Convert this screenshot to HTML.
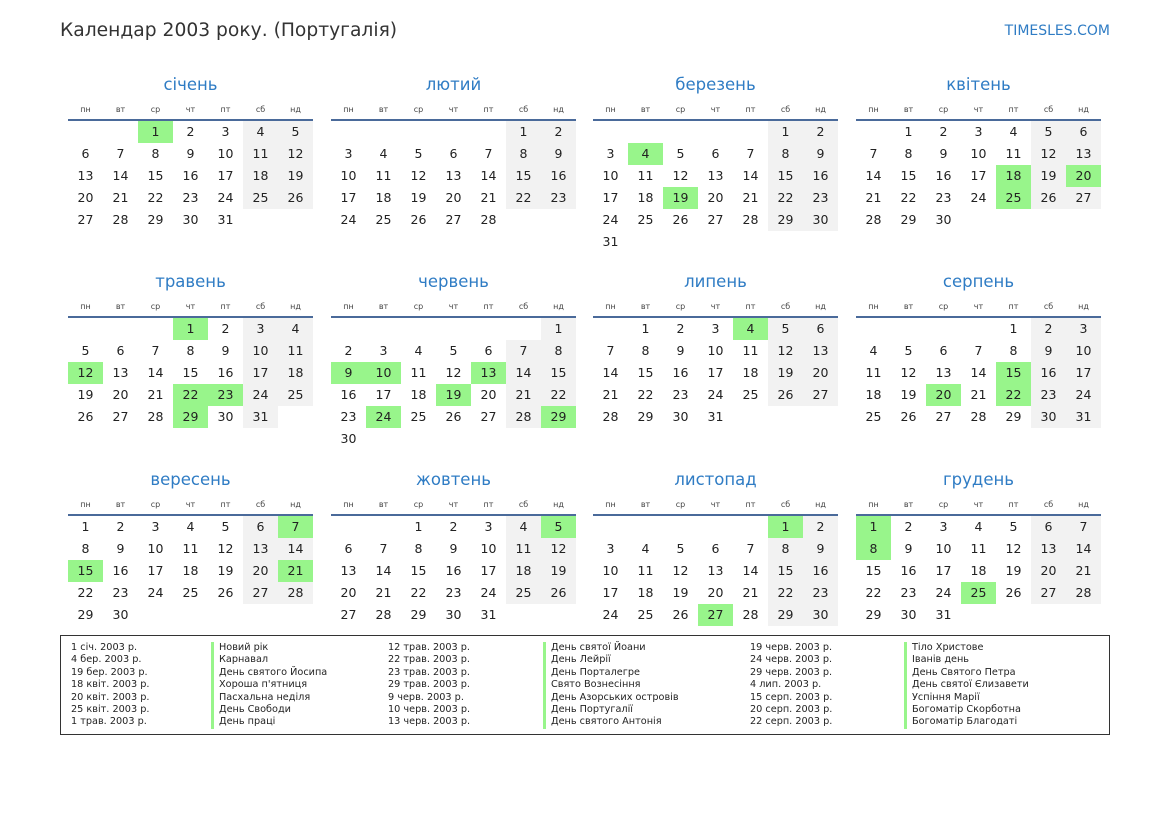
<!DOCTYPE html>
<html><head><meta charset="utf-8">
<style>
*{margin:0;padding:0;box-sizing:border-box}
body{width:1169px;height:827px;background:#fff;position:relative;font-family:"DejaVu Sans","Liberation Sans",sans-serif;color:#222;overflow:hidden}
.t{position:absolute;left:60px;top:20px;font-size:18.7px;color:#333}
.site{position:absolute;right:59px;top:23px;font-size:14px;color:#2f7cc4}
.m{position:absolute;width:245px}
.m h2{font-weight:normal;font-size:16.5px;color:#2f7cc4;text-align:center;height:30px;line-height:28px;margin-top:1px}
.hd{display:grid;grid-template-columns:repeat(7,35px);font-size:8px;color:#444;text-align:center;height:20px;line-height:18px;border-bottom:2px solid #4a6a9a}
.g{display:grid;grid-template-columns:repeat(7,35px);grid-auto-rows:22px;font-size:12.5px;text-align:center;line-height:22px}
.g i,.g s,.g u{font-style:normal;text-decoration:none;display:block}
.g s{background:#f2f2f2}
.g u{background:#98f58b}
.lg{position:absolute;left:60px;top:635px;width:1050px;height:100px;border:1px solid #333}
.c{position:absolute;top:6px;font-size:9.7px;line-height:12.4px;color:#222;white-space:nowrap}
.b div{border-left:3px solid #98f58b;padding-left:5px}
</style></head><body>
<div class="t">Календар 2003 року. (Португалія)</div>
<div class="site">TIMESLES.COM</div>

<div class="m" style="left:68px;top:70px"><h2>січень</h2><div class="hd"><span>пн</span><span>вт</span><span>ср</span><span>чт</span><span>пт</span><span>сб</span><span>нд</span></div><div class="g"><em style="grid-column:span 2"></em><u>1</u><i>2</i><i>3</i><s>4</s><s>5</s><i>6</i><i>7</i><i>8</i><i>9</i><i>10</i><s>11</s><s>12</s><i>13</i><i>14</i><i>15</i><i>16</i><i>17</i><s>18</s><s>19</s><i>20</i><i>21</i><i>22</i><i>23</i><i>24</i><s>25</s><s>26</s><i>27</i><i>28</i><i>29</i><i>30</i><i>31</i></div></div>

<div class="m" style="left:331px;top:70px"><h2>лютий</h2><div class="hd"><span>пн</span><span>вт</span><span>ср</span><span>чт</span><span>пт</span><span>сб</span><span>нд</span></div><div class="g"><em style="grid-column:span 5"></em><s>1</s><s>2</s><i>3</i><i>4</i><i>5</i><i>6</i><i>7</i><s>8</s><s>9</s><i>10</i><i>11</i><i>12</i><i>13</i><i>14</i><s>15</s><s>16</s><i>17</i><i>18</i><i>19</i><i>20</i><i>21</i><s>22</s><s>23</s><i>24</i><i>25</i><i>26</i><i>27</i><i>28</i></div></div>

<div class="m" style="left:593px;top:70px"><h2>березень</h2><div class="hd"><span>пн</span><span>вт</span><span>ср</span><span>чт</span><span>пт</span><span>сб</span><span>нд</span></div><div class="g"><em style="grid-column:span 5"></em><s>1</s><s>2</s><i>3</i><u>4</u><i>5</i><i>6</i><i>7</i><s>8</s><s>9</s><i>10</i><i>11</i><i>12</i><i>13</i><i>14</i><s>15</s><s>16</s><i>17</i><i>18</i><u>19</u><i>20</i><i>21</i><s>22</s><s>23</s><i>24</i><i>25</i><i>26</i><i>27</i><i>28</i><s>29</s><s>30</s><i>31</i></div></div>

<div class="m" style="left:856px;top:70px"><h2>квітень</h2><div class="hd"><span>пн</span><span>вт</span><span>ср</span><span>чт</span><span>пт</span><span>сб</span><span>нд</span></div><div class="g"><em></em><i>1</i><i>2</i><i>3</i><i>4</i><s>5</s><s>6</s><i>7</i><i>8</i><i>9</i><i>10</i><i>11</i><s>12</s><s>13</s><i>14</i><i>15</i><i>16</i><i>17</i><u>18</u><s>19</s><u>20</u><i>21</i><i>22</i><i>23</i><i>24</i><u>25</u><s>26</s><s>27</s><i>28</i><i>29</i><i>30</i></div></div>

<div class="m" style="left:68px;top:267px"><h2>травень</h2><div class="hd"><span>пн</span><span>вт</span><span>ср</span><span>чт</span><span>пт</span><span>сб</span><span>нд</span></div><div class="g"><em style="grid-column:span 3"></em><u>1</u><i>2</i><s>3</s><s>4</s><i>5</i><i>6</i><i>7</i><i>8</i><i>9</i><s>10</s><s>11</s><u>12</u><i>13</i><i>14</i><i>15</i><i>16</i><s>17</s><s>18</s><i>19</i><i>20</i><i>21</i><u>22</u><u>23</u><s>24</s><s>25</s><i>26</i><i>27</i><i>28</i><u>29</u><i>30</i><s>31</s></div></div>

<div class="m" style="left:331px;top:267px"><h2>червень</h2><div class="hd"><span>пн</span><span>вт</span><span>ср</span><span>чт</span><span>пт</span><span>сб</span><span>нд</span></div><div class="g"><em style="grid-column:span 6"></em><s>1</s><i>2</i><i>3</i><i>4</i><i>5</i><i>6</i><s>7</s><s>8</s><u>9</u><u>10</u><i>11</i><i>12</i><u>13</u><s>14</s><s>15</s><i>16</i><i>17</i><i>18</i><u>19</u><i>20</i><s>21</s><s>22</s><i>23</i><u>24</u><i>25</i><i>26</i><i>27</i><s>28</s><u>29</u><i>30</i></div></div>

<div class="m" style="left:593px;top:267px"><h2>липень</h2><div class="hd"><span>пн</span><span>вт</span><span>ср</span><span>чт</span><span>пт</span><span>сб</span><span>нд</span></div><div class="g"><em></em><i>1</i><i>2</i><i>3</i><u>4</u><s>5</s><s>6</s><i>7</i><i>8</i><i>9</i><i>10</i><i>11</i><s>12</s><s>13</s><i>14</i><i>15</i><i>16</i><i>17</i><i>18</i><s>19</s><s>20</s><i>21</i><i>22</i><i>23</i><i>24</i><i>25</i><s>26</s><s>27</s><i>28</i><i>29</i><i>30</i><i>31</i></div></div>

<div class="m" style="left:856px;top:267px"><h2>серпень</h2><div class="hd"><span>пн</span><span>вт</span><span>ср</span><span>чт</span><span>пт</span><span>сб</span><span>нд</span></div><div class="g"><em style="grid-column:span 4"></em><i>1</i><s>2</s><s>3</s><i>4</i><i>5</i><i>6</i><i>7</i><i>8</i><s>9</s><s>10</s><i>11</i><i>12</i><i>13</i><i>14</i><u>15</u><s>16</s><s>17</s><i>18</i><i>19</i><u>20</u><i>21</i><u>22</u><s>23</s><s>24</s><i>25</i><i>26</i><i>27</i><i>28</i><i>29</i><s>30</s><s>31</s></div></div>

<div class="m" style="left:68px;top:465px"><h2>вересень</h2><div class="hd"><span>пн</span><span>вт</span><span>ср</span><span>чт</span><span>пт</span><span>сб</span><span>нд</span></div><div class="g"><i>1</i><i>2</i><i>3</i><i>4</i><i>5</i><s>6</s><u>7</u><i>8</i><i>9</i><i>10</i><i>11</i><i>12</i><s>13</s><s>14</s><u>15</u><i>16</i><i>17</i><i>18</i><i>19</i><s>20</s><u>21</u><i>22</i><i>23</i><i>24</i><i>25</i><i>26</i><s>27</s><s>28</s><i>29</i><i>30</i></div></div>

<div class="m" style="left:331px;top:465px"><h2>жовтень</h2><div class="hd"><span>пн</span><span>вт</span><span>ср</span><span>чт</span><span>пт</span><span>сб</span><span>нд</span></div><div class="g"><em style="grid-column:span 2"></em><i>1</i><i>2</i><i>3</i><s>4</s><u>5</u><i>6</i><i>7</i><i>8</i><i>9</i><i>10</i><s>11</s><s>12</s><i>13</i><i>14</i><i>15</i><i>16</i><i>17</i><s>18</s><s>19</s><i>20</i><i>21</i><i>22</i><i>23</i><i>24</i><s>25</s><s>26</s><i>27</i><i>28</i><i>29</i><i>30</i><i>31</i></div></div>

<div class="m" style="left:593px;top:465px"><h2>листопад</h2><div class="hd"><span>пн</span><span>вт</span><span>ср</span><span>чт</span><span>пт</span><span>сб</span><span>нд</span></div><div class="g"><em style="grid-column:span 5"></em><u>1</u><s>2</s><i>3</i><i>4</i><i>5</i><i>6</i><i>7</i><s>8</s><s>9</s><i>10</i><i>11</i><i>12</i><i>13</i><i>14</i><s>15</s><s>16</s><i>17</i><i>18</i><i>19</i><i>20</i><i>21</i><s>22</s><s>23</s><i>24</i><i>25</i><i>26</i><u>27</u><i>28</i><s>29</s><s>30</s></div></div>

<div class="m" style="left:856px;top:465px"><h2>грудень</h2><div class="hd"><span>пн</span><span>вт</span><span>ср</span><span>чт</span><span>пт</span><span>сб</span><span>нд</span></div><div class="g"><u>1</u><i>2</i><i>3</i><i>4</i><i>5</i><s>6</s><s>7</s><u>8</u><i>9</i><i>10</i><i>11</i><i>12</i><s>13</s><s>14</s><i>15</i><i>16</i><i>17</i><i>18</i><i>19</i><s>20</s><s>21</s><i>22</i><i>23</i><i>24</i><u>25</u><i>26</i><s>27</s><s>28</s><i>29</i><i>30</i><i>31</i></div></div>

<div class="lg">
<div class="c" style="left:10px"><div>1 січ. 2003 р.</div><div>4 бер. 2003 р.</div><div>19 бер. 2003 р.</div><div>18 квіт. 2003 р.</div><div>20 квіт. 2003 р.</div><div>25 квіт. 2003 р.</div><div>1 трав. 2003 р.</div></div>
<div class="c b" style="left:150px"><div>Новий рік</div><div>Карнавал</div><div>День святого Йосипа</div><div>Хороша п'ятниця</div><div>Пасхальна неділя</div><div>День Свободи</div><div>День праці</div></div>
<div class="c" style="left:327px"><div>12 трав. 2003 р.</div><div>22 трав. 2003 р.</div><div>23 трав. 2003 р.</div><div>29 трав. 2003 р.</div><div>9 черв. 2003 р.</div><div>10 черв. 2003 р.</div><div>13 черв. 2003 р.</div></div>
<div class="c b" style="left:482px"><div>День святої Йоани</div><div>День Лейрії</div><div>День Порталегре</div><div>Свято Вознесіння</div><div>День Азорських островів</div><div>День Португалії</div><div>День святого Антонія</div></div>
<div class="c" style="left:689px"><div>19 черв. 2003 р.</div><div>24 черв. 2003 р.</div><div>29 черв. 2003 р.</div><div>4 лип. 2003 р.</div><div>15 серп. 2003 р.</div><div>20 серп. 2003 р.</div><div>22 серп. 2003 р.</div></div>
<div class="c b" style="left:843px"><div>Тіло Христове</div><div>Іванів день</div><div>День Святого Петра</div><div>День святої Єлизавети</div><div>Успіння Марії</div><div>Богоматір Скорботна</div><div>Богоматір Благодаті</div></div>
</div>
</body></html>
